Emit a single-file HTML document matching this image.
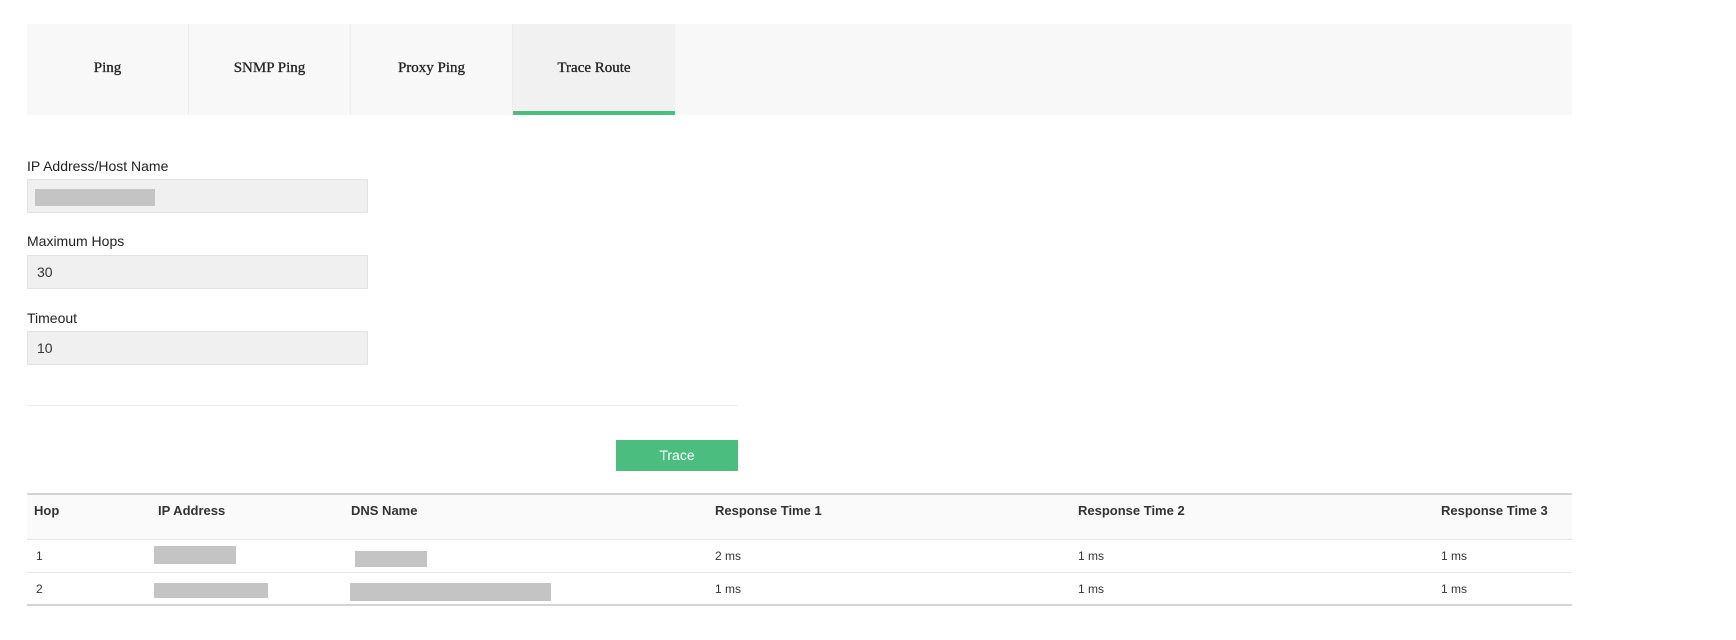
<!DOCTYPE html>
<html><head><meta charset="utf-8"><style>
*{box-sizing:border-box;margin:0;padding:0}
body{width:1736px;height:640px;background:#fff;font-family:"Liberation Sans",sans-serif;color:#222;position:relative;overflow:hidden}
.abs{position:absolute}
.tabs{left:27px;top:24px;width:1545px;height:91px;background:#f8f8f8}
.tab{position:absolute;top:0;height:91px;width:162px;border-right:1px solid #ececec;font-family:"Liberation Serif",serif;font-size:15px;color:#222;text-align:center;line-height:88px;-webkit-text-stroke:0.3px #222}
.lbl{font-size:14px;color:#222}
.inp{left:27px;width:341px;height:34px;background:#f0f0f0;border:1px solid #e2e2e2;font-size:14px;padding-left:9px;line-height:32px;color:#333}
.blur{position:absolute;background:#c4c4c4}
.th{position:absolute;top:503px;font-size:13px;font-weight:bold;color:#333}
.td{position:absolute;font-size:12px;color:#333}
</style></head><body>
<div class="abs tabs">
<div class="tab" style="left:0">Ping</div>
<div class="tab" style="left:162px">SNMP Ping</div>
<div class="tab" style="left:324px">Proxy Ping</div>
<div class="tab" style="left:486px;background:#f1f1f1;border-right:none;">Trace Route<div style="position:absolute;left:0;right:0;bottom:0;height:4px;background:#4bbd7f"></div></div>
</div>
<div class="abs lbl" style="left:27px;top:158px">IP Address/Host Name</div>
<div class="abs inp" style="top:179px"><div class="blur" style="left:7px;top:9px;width:120px;height:17px"></div></div>
<div class="abs lbl" style="left:27px;top:233px">Maximum Hops</div>
<div class="abs inp" style="top:255px">30</div>
<div class="abs lbl" style="left:27px;top:310px">Timeout</div>
<div class="abs inp" style="top:331px">10</div>
<div class="abs" style="left:27px;top:405px;width:711px;height:1px;background:#ececec"></div>
<div class="abs" style="left:616px;top:440px;width:122px;height:31px;background:#4bbd7f;color:#fff;font-size:14px;text-align:center;line-height:31px">Trace</div>
<div class="abs" style="left:27px;top:493px;width:1545px;height:2px;background:#d4d4d4"></div>
<div class="abs" style="left:27px;top:495px;width:1545px;height:44px;background:#fafafa"></div>
<div class="abs" style="left:27px;top:539px;width:1545px;height:1px;background:#e6e6e6"></div>
<div class="abs" style="left:27px;top:572px;width:1545px;height:1px;background:#e6e6e6"></div>
<div class="abs" style="left:27px;top:604px;width:1545px;height:2px;background:#d4d4d4"></div>
<div class="th" style="left:34px">Hop</div>
<div class="th" style="left:158px">IP Address</div>
<div class="th" style="left:351px">DNS Name</div>
<div class="th" style="left:715px">Response Time 1</div>
<div class="th" style="left:1078px">Response Time 2</div>
<div class="th" style="left:1441px">Response Time 3</div>
<div class="td" style="left:36px;top:549px">1</div>
<div class="blur" style="left:154px;top:546px;width:82px;height:18px"></div>
<div class="blur" style="left:355px;top:551px;width:72px;height:16px"></div>
<div class="td" style="left:715px;top:549px">2 ms</div>
<div class="td" style="left:1078px;top:549px">1 ms</div>
<div class="td" style="left:1441px;top:549px">1 ms</div>
<div class="td" style="left:36px;top:582px">2</div>
<div class="blur" style="left:154px;top:583px;width:114px;height:15px"></div>
<div class="blur" style="left:350px;top:583px;width:201px;height:18px"></div>
<div class="td" style="left:715px;top:582px">1 ms</div>
<div class="td" style="left:1078px;top:582px">1 ms</div>
<div class="td" style="left:1441px;top:582px">1 ms</div>
</body></html>
